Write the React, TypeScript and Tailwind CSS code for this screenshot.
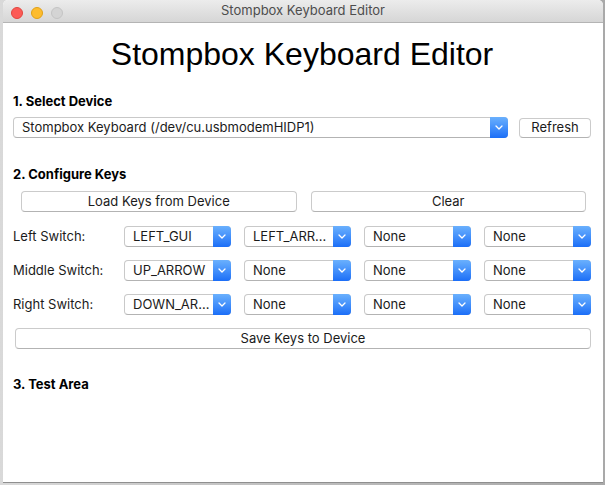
function Chevron() {
  return (
    <svg width="8" height="5" viewBox="0 0 8 5">
      <path d="M1 1l3 3 3-3" stroke="white" strokeWidth="1.3" fill="none" strokeLinecap="round" strokeLinejoin="round" />
    </svg>
  );
}

function Select({ value, className }: { value: string; className: string }) {
  return (
    <div className={`flex h-[21px] rounded-[4px] border border-[#c9c9c9] border-b-[#b3b3b3] bg-white ${className}`}>
      <div className="min-w-0 flex-1 overflow-hidden whitespace-nowrap pl-[8px] text-[13px] leading-[19px] text-[#1b1b1b]">{value}</div>
      <div className="-my-px -mr-px flex w-[18px] items-center justify-center rounded-r-[4px] bg-gradient-to-b from-[#6ab0fd] to-[#1b6ef7]">
        <Chevron />
      </div>
    </div>
  );
}

function Button({ label, className }: { label: string; className: string }) {
  return (
    <div className={`flex items-center justify-center rounded-[4px] border border-[#cbcbcb] border-b-[#b3b3b3] bg-white text-[13px] text-[#1b1b1b] ${className}`}>
      {label}
    </div>
  );
}

const rows = [
  { label: "Left Switch:", keys: ["LEFT_GUI", "LEFT_ARR…", "None", "None"] },
  { label: "Middle Switch:", keys: ["UP_ARROW", "None", "None", "None"] },
  { label: "Right Switch:", keys: ["DOWN_AR…", "None", "None", "None"] },
];

export default function App() {
  return (
    <div className="h-[485px] w-[605px] bg-gradient-to-r from-[#d9d9d9] via-[#bdbdbd] to-[#a9a9a9] pl-[3px] font-['Inter',sans-serif]">
      <div className="flex h-[483px] w-[600px] flex-col overflow-hidden rounded-t-[5px] border-b border-[#8f8f8f] bg-white">
        {/* title bar */}
        <div className="relative flex h-[23px] items-center justify-center border-b border-[#b4b4b4] bg-gradient-to-b from-[#ececec] to-[#d6d6d6]">
          <div className="absolute left-[8px] top-[7px] flex gap-[8px]">
            <div className="h-[12px] w-[12px] rounded-full border border-[#e2463f] bg-[#fc5b57]" />
            <div className="h-[12px] w-[12px] rounded-full border border-[#e1a116] bg-[#fdbc2e]" />
            <div className="h-[12px] w-[12px] rounded-full border border-[#c4c4c4] bg-[#d4d4d4]" />
          </div>
          <span className="text-[13px] text-[#4d4d4d]">Stompbox Keyboard Editor</span>
        </div>

        <div className="flex flex-col pl-[10px] pr-[12px]">
          <h1 className="mt-[15px] text-center font-['Liberation_Sans',Arial,sans-serif] text-[32px] leading-[32px] text-black">
            Stompbox Keyboard Editor
          </h1>

          <h2 className="mt-[23px] text-[13px] font-bold leading-[16px] text-black">1. Select Device</h2>
          <div className="mt-[8px] flex items-start gap-[11px]">
            <Select value="Stompbox Keyboard (/dev/cu.usbmodemHIDP1)" className="w-[495px]" />
            <Button label="Refresh" className="mt-[1px] h-[20px] w-[72px]" />
          </div>

          <h2 className="mt-[28px] text-[13px] font-bold leading-[16px] text-black">2. Configure Keys</h2>
          <div className="mt-[9px] flex gap-[14px] pl-[8px] pr-[5px]">
            <Button label="Load Keys from Device" className="h-[21px] flex-1" />
            <Button label="Clear" className="h-[21px] flex-1" />
          </div>

          <div className="mt-[14px] flex flex-col gap-[13px]">
            {rows.map((r) => (
              <div key={r.label} className="flex items-center">
                <div className="w-[111px] text-[13px] text-[#1b1b1b]">{r.label}</div>
                <div className="flex gap-[13px]">
                  {r.keys.map((k, i) => (
                    <Select key={i} value={k} className="w-[107px]" />
                  ))}
                </div>
              </div>
            ))}
          </div>

          <Button label="Save Keys to Device" className="mt-[13px] ml-[2px] h-[21px]" />

          <h2 className="mt-[27px] text-[13px] font-bold leading-[16px] text-black">3. Test Area</h2>
        </div>
      </div>
    </div>
  );
}
